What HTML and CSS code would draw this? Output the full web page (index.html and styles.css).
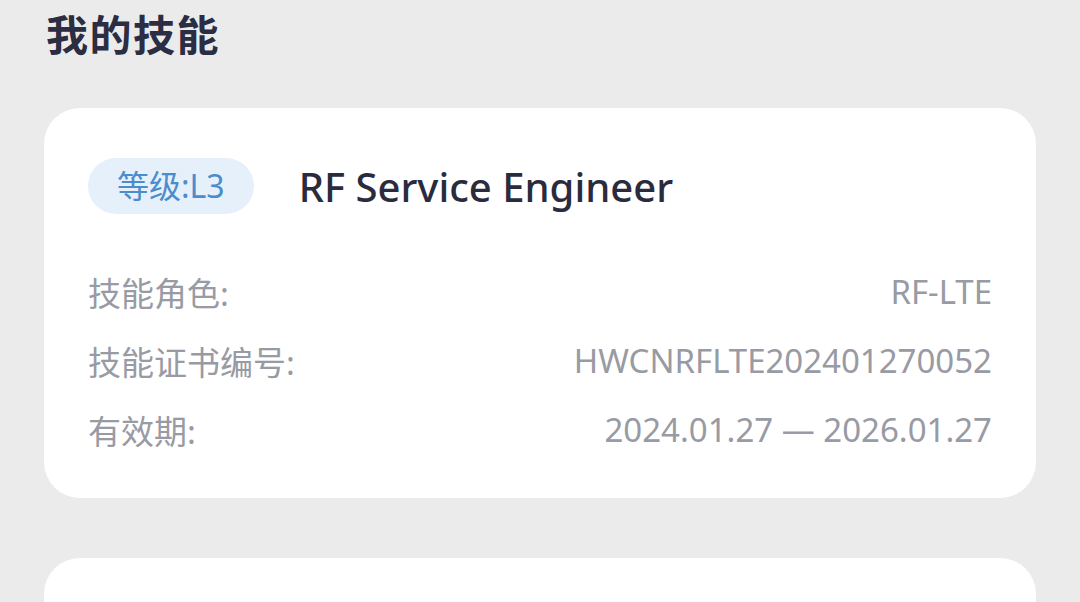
FILE: index.html
```html
<!DOCTYPE html>
<html>
<head>
<meta charset="utf-8"/>
<title>我的技能</title>
<link rel="stylesheet" href="styles.css">
</head>
<body>
<h1 class="page-title">我的技能</h1>

<div class="skill-card">
  <div class="skill-head">
    <span class="level">等级:L3</span>
    <span class="skill-name">RF Service Engineer</span>
  </div>
  <div class="skill-row">
    <span class="label">技能角色:</span>
    <span class="value">RF-LTE</span>
  </div>
  <div class="skill-row">
    <span class="label">技能证书编号:</span>
    <span class="value">HWCNRFLTE202401270052</span>
  </div>
  <div class="skill-row">
    <span class="label">有效期:</span>
    <span class="value">2024.01.27 — 2026.01.27</span>
  </div>
</div>

<div class="skill-card"></div>
</body>
</html>
```

FILE: styles.css
```css
body {
  margin: 0;
  padding: 0 44px;
  background-color: #ebebeb;
  font-family: "Noto Sans", "Noto Sans CJK SC", sans-serif;
  overflow: hidden;
}

.page-title {
  margin: 0;
  padding: 10px 2px 0;
  height: 108px;
  box-sizing: border-box;
  font-size: 42px;
  line-height: 50px;
  letter-spacing: 1.5px;
  font-weight: 700;
  color: #2b2d42;
}

.skill-card {
  background: #fff;
  border-radius: 36px;
  padding: 50px 44px 34px;
  margin-bottom: 60px;
  min-height: 300px;
  box-sizing: border-box;
}

.skill-head {
  display: flex;
  align-items: center;
  gap: 45px;
  margin-bottom: 43px;
}

.level {
  display: inline-block;
  height: 56px;
  line-height: 56px;
  padding: 0 29px;
  border-radius: 28px;
  background: #e5f0fb;
  color: #4b8ccc;
  font-size: 32px;
}

.skill-name {
  font-size: 40px;
  font-weight: 500;
  color: #2a2c3e;
}

.skill-row {
  display: flex;
  justify-content: space-between;
  align-items: center;
  height: 69px;
  font-size: 33px;
  color: #989aa4;
}
```
